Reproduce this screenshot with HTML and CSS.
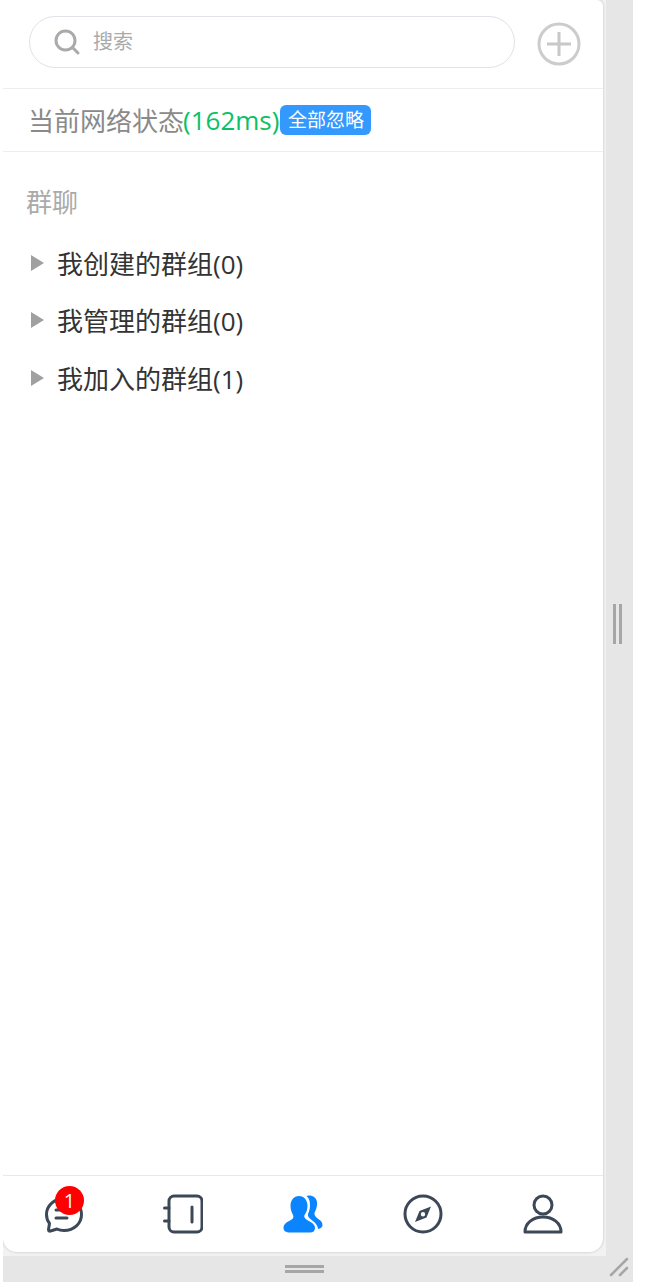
FILE: index.html
```html
<!DOCTYPE html>
<html lang="zh">
<head>
  <meta charset="UTF-8">
  <meta name="viewport" content="width=device-width, initial-scale=1">
  <title>群聊</title>
  <link rel="stylesheet" href="styles.css">
</head>
<body>
  <div class="window">
    <div class="stage">
      <div class="panel">
        <header class="top-bar">
          <div class="search-box">
            <svg class="search-icon" viewBox="0 0 28 28" width="28" height="28">
              <circle cx="12.5" cy="12.5" r="9.5" fill="none" stroke="#aaaaaa" stroke-width="3"/>
              <path d="M19.5 19.5 L25 25" stroke="#aaaaaa" stroke-width="3" stroke-linecap="round"/>
            </svg>
            <span class="search-text">搜索</span>
          </div>
          <svg class="add-icon" viewBox="0 0 44 44" width="44" height="44">
            <circle cx="22" cy="22" r="20" fill="none" stroke="#cccccc" stroke-width="3"/>
            <path d="M22 10 V34 M10 22 H34" stroke="#c8c8c8" stroke-width="3"/>
          </svg>
        </header>

        <div class="net-status">
          <span>当前网络状态</span><span class="net-ms">(162ms)</span><span class="ignore-btn">全部忽略</span>
        </div>

        <main class="group-list">
          <div class="section-title">群聊</div>
          <div class="group-row"><i class="arrow"></i>我创建的群组(0)</div>
          <div class="group-row"><i class="arrow"></i>我管理的群组(0)</div>
          <div class="group-row"><i class="arrow"></i>我加入的群组(1)</div>
        </main>

        <nav class="tab-bar">
          <div class="tab">
            <svg viewBox="0 0 40 40" width="40" height="40" fill="none" stroke="#3c4858" stroke-width="3" stroke-linecap="round" stroke-linejoin="round">
              <path d="M21 4.500 C11.500 4.500 3.500 11.500 3.500 20.500 C3.500 24 4.500 27 6.500 29.500 L5.500 35.500 C5.500 37 6.500 37.500 7.500 37 L14 35 C16 36 18.500 36.500 21 36.500 C31 36.500 38.500 29.500 38.500 20.500 C38.500 11.500 30.500 4.500 21 4.500 Z"/>
              <path d="M13 16 H27 M13 24 H24"/>
            </svg>
            <span class="msg-badge">1</span>
          </div>
          <div class="tab">
            <svg viewBox="0 0 40 40" width="40" height="40" fill="none" stroke="#3c4858" stroke-width="3" stroke-linecap="round" stroke-linejoin="round">
              <rect x="6" y="2" width="33" height="36" rx="5"/>
              <path d="M29 13 V28 M1.500 14 H6 M1.500 27 H6"/>
            </svg>
          </div>
          <div class="tab">
            <svg viewBox="0 0 40 40" width="40" height="40">
              <path fill="#0a84ff" d="M23.500 2 C25 1 33 1 34 8 C34.500 13 32.500 16.500 31.500 19 C31 22 34 24 36 25.500 C38.500 27 39.500 29 39.500 31 C39.500 33 38 34.500 35 35 C35 31 31.500 28 28 25.500 C25.500 23.500 24.500 22 25 20 C26.500 17 27 14 27 11 C27 7 26 4 23.500 2 Z"/>
              <path fill="#0a84ff" d="M16 2 C21 2 24.500 6 24.500 12 C24.500 16 23 19 21.500 21 C20.500 23 22.500 25 25 26.500 C28.500 28.500 32 30 32 34 C32 37 30 38.500 27 38.500 L7 38.500 C3 38.500 0.500 37 0.500 34 C0.500 30 4 28 8 26 C10 25 11 23 10 21 C9 19 7.500 16 7.500 12 C7.500 6 11 2 16 2 Z"/>
            </svg>
          </div>
          <div class="tab">
            <svg viewBox="0 0 40 40" width="40" height="40">
              <circle cx="20" cy="20" r="18" fill="none" stroke="#3c4858" stroke-width="3"/>
              <path fill="#3c4858" fill-rule="evenodd" d="M28 12.500 L23.500 23.500 L12 28 L16.500 17 Z M20 18 A2.200 2.200 0 1 0 20 22.400 A2.200 2.200 0 1 0 20 18 Z"/>
            </svg>
          </div>
          <div class="tab">
            <svg viewBox="0 0 40 40" width="40" height="40" fill="none" stroke="#3c4858" stroke-width="3" stroke-linejoin="round">
              <circle cx="20" cy="11" r="9"/>
              <path d="M2 38 C2 29 10 23 20 23 C30 23 38 29 38 38 Z"/>
            </svg>
          </div>
        </nav>
      </div>
    </div>

    <div class="side-strip">
      <span class="v-grip"></span><span class="v-grip"></span>
    </div>

    <div class="bottom-strip">
      <span class="h-grip"></span><span class="h-grip"></span>
    </div>

    <div class="corner-strip">
      <svg viewBox="0 0 20 20" width="20" height="20" stroke="#a6a6a6" stroke-width="2.500" stroke-linecap="round">
        <path d="M2 18 L18 2 M11 18 L18 11"/>
      </svg>
    </div>
  </div>
</body>
</html>
```

FILE: styles.css
```css
html, body {
  margin: 0;
  padding: 0;
  background: #fff;
}
body {
  font-family: "Open Sans", "Noto Sans CJK SC", sans-serif;
  color: #333;
}
.window {
  width: 630px;
  height: 1282px;
  margin-left: 3px;
  background: #e6e6e6;
  display: grid;
  grid-template-columns: 603px 27px;
  grid-template-rows: 1256px 26px;
  overflow: hidden;
}
.stage {
  background: #f2f2f2;
  padding-right: 3px;
  padding-bottom: 4px;
  box-sizing: border-box;
  height: 1256px;
}
.panel {
  height: 1252px;
  box-sizing: border-box;
  background: #fff;
  border-radius: 0 6px 14px 14px;
  box-shadow: 0 0 2px 1px #d8d8d8;
  display: flex;
  flex-direction: column;
}

.top-bar {
  height: 89px;
  box-sizing: border-box;
  border-bottom: 1px solid #eee;
  padding: 16px 22px 0 26px;
  display: flex;
  align-items: flex-start;
  justify-content: space-between;
}
.search-box {
  width: 486px;
  height: 52px;
  box-sizing: border-box;
  border: 1px solid #e2e2e8;
  border-radius: 26px;
  display: flex;
  align-items: center;
  padding-left: 23px;
}
.search-icon {
  flex: none;
}
.search-text {
  margin-left: 12px;
  margin-bottom: 4px;
  font-size: 20px;
  color: #aaa;
}
.add-icon {
  margin-top: 6px;
}

.net-status {
  height: 63px;
  box-sizing: border-box;
  border-bottom: 1px solid #eee;
  padding-left: 25px;
  display: flex;
  align-items: center;
  font-size: 26px;
  color: #8a8a8a;
}
.net-ms {
  margin-left: -1px;
  color: #0ac166;
}
.ignore-btn {
  width: 91px;
  height: 30px;
  margin-top: -1px;
  margin-left: 1px;
  border-radius: 6px;
  background: #3399ff;
  color: #fff;
  font-size: 19px;
  line-height: 30px;
  text-align: center;
}

.group-list {
  flex: 1;
  padding: 31px 0 0 23px;
}
.section-title {
  height: 38px;
  line-height: 38px;
  font-size: 26px;
  color: #aaa;
  margin-bottom: 13px;
}
.group-row {
  height: 57.500px;
  display: flex;
  align-items: center;
  font-size: 26px;
  color: #333;
}
.arrow {
  width: 0;
  height: 0;
  margin: 0 13px 0 5px;
  border-left: 13px solid #a0a0a0;
  border-top: 8.500px solid transparent;
  border-bottom: 8.500px solid transparent;
}

.tab-bar {
  height: 77px;
  box-sizing: border-box;
  border-top: 1px solid #e8e8e8;
  display: flex;
}
.tab {
  flex: 1;
  position: relative;
  display: flex;
  align-items: center;
  justify-content: center;
}
.msg-badge {
  position: absolute;
  left: 52px;
  top: 10px;
  width: 29px;
  height: 29px;
  border-radius: 50%;
  background: #ff0000;
  color: #fff;
  font-size: 20px;
  line-height: 29px;
  text-align: center;
}

.side-strip {
  display: flex;
  align-items: center;
  justify-content: center;
  gap: 3px;
  padding-right: 4px;
  padding-bottom: 8px;
}
.v-grip {
  width: 3px;
  height: 40px;
  background: #a6a6a6;
}
.bottom-strip {
  display: flex;
  flex-direction: column;
  align-items: center;
  justify-content: center;
  gap: 2px;
  padding-bottom: 1px;
}
.h-grip {
  width: 39px;
  height: 3px;
  background: #a6a6a6;
}
.corner-strip {
  padding-top: 1px;
  padding-left: 3px;
}
```
